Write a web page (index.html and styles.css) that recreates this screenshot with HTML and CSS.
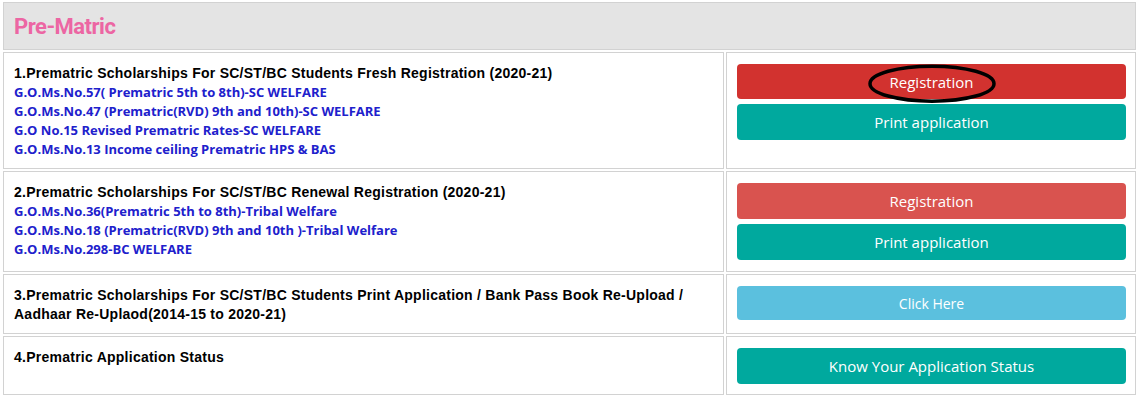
FILE: index.html
```html
<!DOCTYPE html>
<html>
<head>
<meta charset="utf-8">
<link rel="stylesheet" href="styles.css">
</head>
<body>
<div class="wrap">
<table class="grid">
  <colgroup>
    <col class="c1">
    <col class="c2">
  </colgroup>
  <tr>
    <td class="head" colspan="2">Pre-Matric</td>
  </tr>
  <tr>
    <td class="info">
      <div class="title">1.Prematric Scholarships For SC/ST/BC Students Fresh Registration (2020-21)</div>
      <a class="go" href="#">G.O.Ms.No.57( Prematric 5th to 8th)-SC WELFARE</a>
      <a class="go" href="#">G.O.Ms.No.47 (Prematric(RVD) 9th and 10th)-SC WELFARE</a>
      <a class="go" href="#">G.O No.15 Revised Prematric Rates-SC WELFARE</a>
      <a class="go" href="#">G.O.Ms.No.13 Income ceiling Prematric HPS &amp; BAS</a>
    </td>
    <td class="acts">
      <a class="btn red-dark marked" href="#">Registration<svg class="ring" viewBox="0 0 132 42" width="132" height="42"><ellipse cx="66" cy="21" rx="62" ry="17.5" fill="none" stroke="#000" stroke-width="3.5"/></svg></a>
      <a class="btn teal" href="#">Print application</a>
    </td>
  </tr>
  <tr>
    <td class="info">
      <div class="title">2.Prematric Scholarships For SC/ST/BC Renewal Registration (2020-21)</div>
      <a class="go" href="#">G.O.Ms.No.36(Prematric 5th to 8th)-Tribal Welfare</a>
      <a class="go" href="#">G.O.Ms.No.18 (Prematric(RVD) 9th and 10th )-Tribal Welfare</a>
      <a class="go" href="#">G.O.Ms.No.298-BC WELFARE</a>
    </td>
    <td class="acts">
      <a class="btn red" href="#">Registration</a>
      <a class="btn teal" href="#">Print application</a>
    </td>
  </tr>
  <tr>
    <td class="info">
      <div class="title">3.Prematric Scholarships For SC/ST/BC Students Print Application / Bank Pass Book Re-Upload / Aadhaar Re-Uplaod(2014-15 to 2020-21)</div>
    </td>
    <td class="acts">
      <a class="btn sky" href="#">Click Here</a>
    </td>
  </tr>
  <tr class="last">
    <td class="info">
      <div class="title">4.Prematric Application Status</div>
    </td>
    <td class="acts">
      <a class="btn teal" href="#">Know Your Application Status</a>
    </td>
  </tr>
</table>
</div>
</body>
</html>
```
FILE: styles.css
```css
html, body {
  margin: 0;
  padding: 0;
  background: #fff;
}
.wrap {
  padding: 0 1px;
}
.grid {
  width: 1137px;
  border-collapse: separate;
  border-spacing: 2px;
  table-layout: fixed;
}
.c1 { width: 721px; }
.c2 { width: 410px; }
.grid td {
  border: 1px solid #d2d2d2;
  vertical-align: top;
}
.head {
  background: #e4e4e4;
  border-color: #c9c9c9;
  height: 48px;
  padding: 0 10px;
  box-sizing: border-box;
  font-family: Roboto, "Liberation Sans", sans-serif;
  font-weight: 700;
  font-size: 22px;
  letter-spacing: -0.5px;
  color: #ec66a3;
  vertical-align: middle !important;
}
.info {
  padding: 11px 10px 9px;
  box-sizing: border-box;
}
.title {
  font-family: "Liberation Sans", Arial, sans-serif;
  font-weight: 700;
  font-size: 14px;
  letter-spacing: 0.25px;
  line-height: 19px;
  color: #000;
}
.go {
  display: block;
  font-family: "Open Sans", sans-serif;
  font-weight: 700;
  font-size: 13px;
  line-height: 19px;
  color: #2020cc;
  text-decoration: none;
}
.acts {
  padding: 11px 9px 11px 10px;
  box-sizing: border-box;
}
.last .acts {
  padding-bottom: 10px;
}
.btn {
  position: relative;
  display: flex;
  align-items: center;
  justify-content: center;
  height: 36px;
  border-radius: 4px;
  font-family: "Open Sans", sans-serif;
  font-size: 15px;
  color: #fff;
  text-decoration: none;
}
.btn + .btn {
  margin-top: 5px;
}
.red-dark { background: #d2322f; height: 35px; }
.red { background: #d9534f; }
.teal { background: #00a99e; }
.sky { background: #5bc0de; height: 34px; font-size: 14px; }
.ring {
  position: absolute;
  left: 50%;
  top: 50%;
  transform: translate(-50%, -46%);
  pointer-events: none;
}
```
